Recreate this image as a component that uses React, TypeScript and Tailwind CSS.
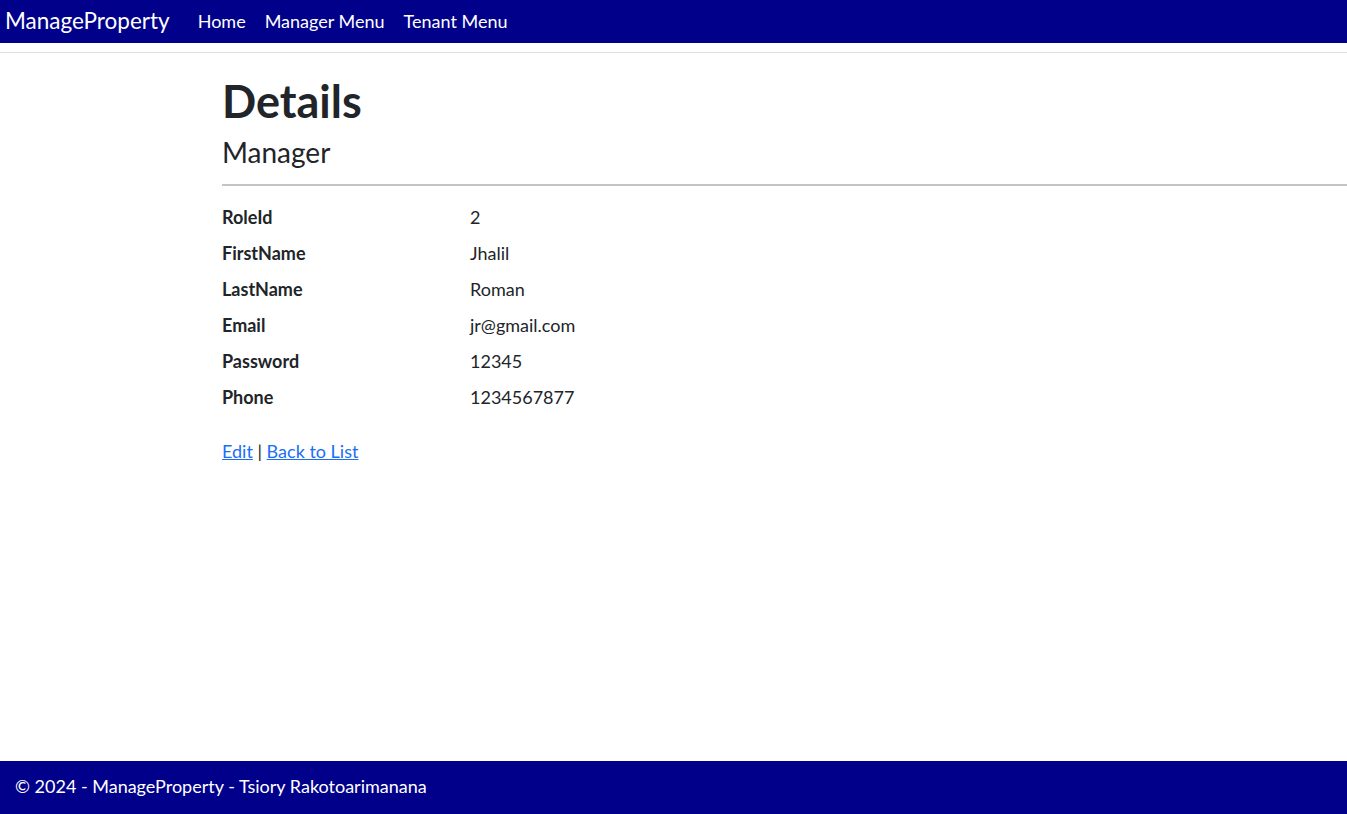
const rows = [
  { label: "RoleId", value: "2" },
  { label: "FirstName", value: "Jhalil" },
  { label: "LastName", value: "Roman" },
  { label: "Email", value: "jr@gmail.com" },
  { label: "Password", value: "12345" },
  { label: "Phone", value: "1234567877" },
];

function App() {
  return (
    <div className="min-h-screen flex flex-col bg-white text-[#212529] font-['Segoe_UI','Lato',sans-serif]">
      <header>
        <nav className="h-[43px] bg-[#00008b] flex items-center px-[5px] text-white">
          <a href="#" className="text-[22.5px] mr-[28px] leading-none">
            ManageProperty
          </a>
          <ul className="flex gap-[19px] text-[18px]">
            <li><a href="#">Home</a></li>
            <li><a href="#">Manager Menu</a></li>
            <li><a href="#">Tenant Menu</a></li>
          </ul>
        </nav>
        <div className="h-[9px]" />
        <div className="border-b border-[#dee2e6]" />
      </header>

      <main className="flex-1 pl-[222px] pt-[21px]">
        <h1 className="text-[45px] font-bold leading-[54px]">Details</h1>
        <div>
          <h4 className="text-[28px] leading-[34px] mt-[7px]">Manager</h4>
          <hr className="border-t-2 border-[#c4c4c4] mt-[15px] mb-[19px]" />
          <dl className="grid grid-cols-[248px_1fr] text-[18px] leading-[24px]">
            {rows.map((r) => (
              <div key={r.label} className="contents">
                <dt className="font-bold mb-[12px]">{r.label}</dt>
                <dd className="mb-[12px]">{r.value}</dd>
              </div>
            ))}
          </dl>
        </div>
        <div className="mt-[18px] text-[18px] leading-[24px]">
          <a href="#" className="text-[#1a6ef5] underline">Edit</a> |{" "}
          <a href="#" className="text-[#1a6ef5] underline">Back to List</a>
        </div>
      </main>

      <footer className="h-[53px] bg-[#00008b] text-white flex items-center px-[15px] pb-[3px] text-[18px]">
        © 2024 - ManageProperty - Tsiory Rakotoarimanana
      </footer>
    </div>
  );
}

export default App;
